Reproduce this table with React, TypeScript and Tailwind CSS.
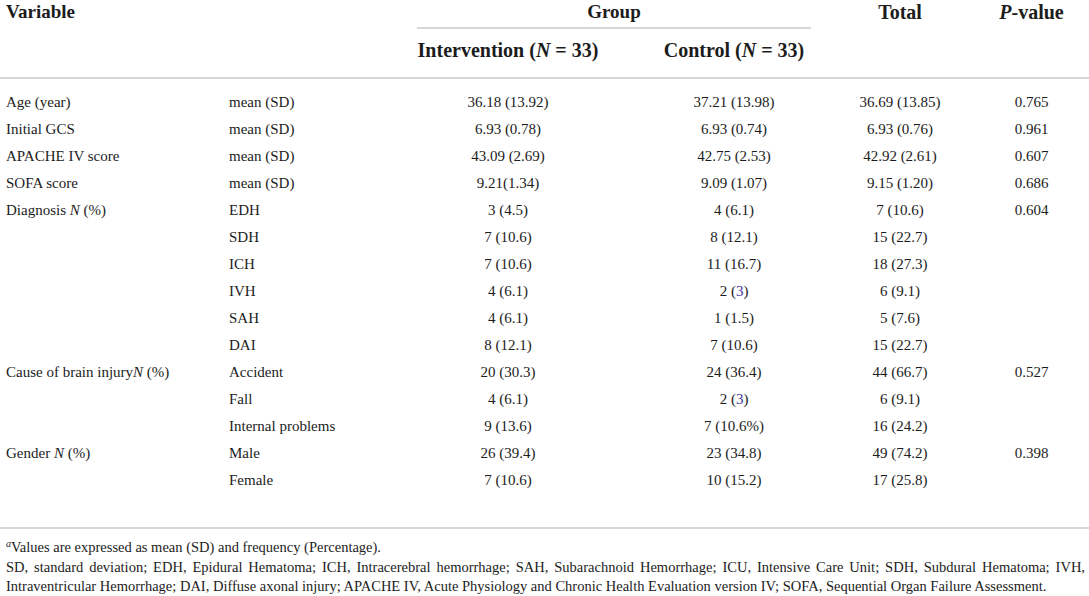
import React from "react";

type Row = {
  v?: React.ReactNode;
  s: string;
  i: React.ReactNode;
  c: React.ReactNode;
  t: string;
  p?: string;
};

const N = () => <span className="italic">N</span>;
const Ref = ({ n }: { n: string }) => <span className="text-[#3d3a9e]">{n}</span>;

const rows: Row[] = [
  { v: "Age (year)", s: "mean (SD)", i: "36.18 (13.92)", c: "37.21 (13.98)", t: "36.69 (13.85)", p: "0.765" },
  { v: "Initial GCS", s: "mean (SD)", i: "6.93 (0.78)", c: "6.93 (0.74)", t: "6.93 (0.76)", p: "0.961" },
  { v: "APACHE IV score", s: "mean (SD)", i: "43.09 (2.69)", c: "42.75 (2.53)", t: "42.92 (2.61)", p: "0.607" },
  { v: "SOFA score", s: "mean (SD)", i: "9.21(1.34)", c: "9.09 (1.07)", t: "9.15 (1.20)", p: "0.686" },
  { v: <>Diagnosis <N /> (%)</>, s: "EDH", i: "3 (4.5)", c: "4 (6.1)", t: "7 (10.6)", p: "0.604" },
  { s: "SDH", i: "7 (10.6)", c: "8 (12.1)", t: "15 (22.7)" },
  { s: "ICH", i: "7 (10.6)", c: "11 (16.7)", t: "18 (27.3)" },
  { s: "IVH", i: "4 (6.1)", c: <>2 (<Ref n="3" />)</>, t: "6 (9.1)" },
  { s: "SAH", i: "4 (6.1)", c: "1 (1.5)", t: "5 (7.6)" },
  { s: "DAI", i: "8 (12.1)", c: "7 (10.6)", t: "15 (22.7)" },
  { v: <>Cause of brain injury<N /> (%)</>, s: "Accident", i: "20 (30.3)", c: "24 (36.4)", t: "44 (66.7)", p: "0.527" },
  { s: "Fall", i: "4 (6.1)", c: <>2 (<Ref n="3" />)</>, t: "6 (9.1)" },
  { s: "Internal problems", i: "9 (13.6)", c: "7 (10.6%)", t: "16 (24.2)" },
  { v: <>Gender <N /> (%)</>, s: "Male", i: "26 (39.4)", c: "23 (34.8)", t: "49 (74.2)", p: "0.398" },
  { s: "Female", i: "7 (10.6)", c: "10 (15.2)", t: "17 (25.8)" },
];

export default function App() {
  return (
    <div className="w-[1089px] h-[596px] bg-white text-[#1c1c1c] overflow-hidden font-['Liberation_Serif','Times_New_Roman',serif]">
      <table className="w-full table-fixed border-collapse text-[15px]">
        <colgroup>
          <col className="w-[229px]" />
          <col className="w-[171px]" />
          <col className="w-[216px]" />
          <col className="w-[236px]" />
          <col className="w-[96px]" />
          <col />
        </colgroup>
        <thead className="text-[19px] font-bold">
          <tr className="h-[29px] align-top leading-[24px]">
            <th className="pl-[6px] text-left font-bold">Variable</th>
            <th />
            <th colSpan={2} className="p-0">
              <div className="ml-[17px] w-[394px] h-[29px] border-b-2 border-[#d6d6d6] text-center">Group</div>
            </th>
            <th className="text-center text-[20px]">Total</th>
            <th className="pl-[26px] text-center text-[20px]">
              <span className="italic">P</span>-value
            </th>
          </tr>
          <tr className="h-[49px] align-top leading-[24px] text-[20px]">
            <th className="border-b-2 border-[#d6d6d6]" />
            <th className="border-b-2 border-[#d6d6d6]" />
            <th className="border-b-2 border-[#d6d6d6] pt-[9px] text-center">
              Intervention (<span className="italic">N</span> = 33)
            </th>
            <th className="border-b-2 border-[#d6d6d6] pt-[9px] text-center">
              Control (<span className="italic">N</span> = 33)
            </th>
            <th className="border-b-2 border-[#d6d6d6]" />
            <th className="border-b-2 border-[#d6d6d6]" />
          </tr>
        </thead>
        <tbody>
          <tr className="h-[10px]">
            <td colSpan={6} />
          </tr>
          {rows.map((r, idx) => (
            <tr key={idx} className="h-[27px] leading-[18px]">
              <td className="pl-[6px] whitespace-nowrap">{r.v}</td>
              <td className="whitespace-nowrap">{r.s}</td>
              <td className="text-center">{r.i}</td>
              <td className="text-center">{r.c}</td>
              <td className="text-center">{r.t}</td>
              <td className="pl-[26px] text-center">{r.p}</td>
            </tr>
          ))}
          <tr className="h-[35px]">
            <td colSpan={6} className="border-b-2 border-[#d6d6d6]" />
          </tr>
        </tbody>
      </table>
      <div className="pl-[6px] pr-[4px] pt-[9px] text-[14.5px] leading-[19.5px]">
        <p>
          <sup className="italic text-[10px]">a</sup>Values are expressed as mean (SD) and frequency (Percentage).
        </p>
        <p className="text-justify [text-align-last:justify] whitespace-nowrap">
          SD, standard deviation; EDH, Epidural Hematoma; ICH, Intracerebral hemorrhage; SAH, Subarachnoid Hemorrhage; ICU, Intensive Care Unit; SDH, Subdural Hematoma; IVH,
        </p>
        <p className="whitespace-nowrap">
          Intraventricular Hemorrhage; DAI, Diffuse axonal injury; APACHE IV, Acute Physiology and Chronic Health Evaluation version IV; SOFA, Sequential Organ Failure Assessment.
        </p>
      </div>
    </div>
  );
}
